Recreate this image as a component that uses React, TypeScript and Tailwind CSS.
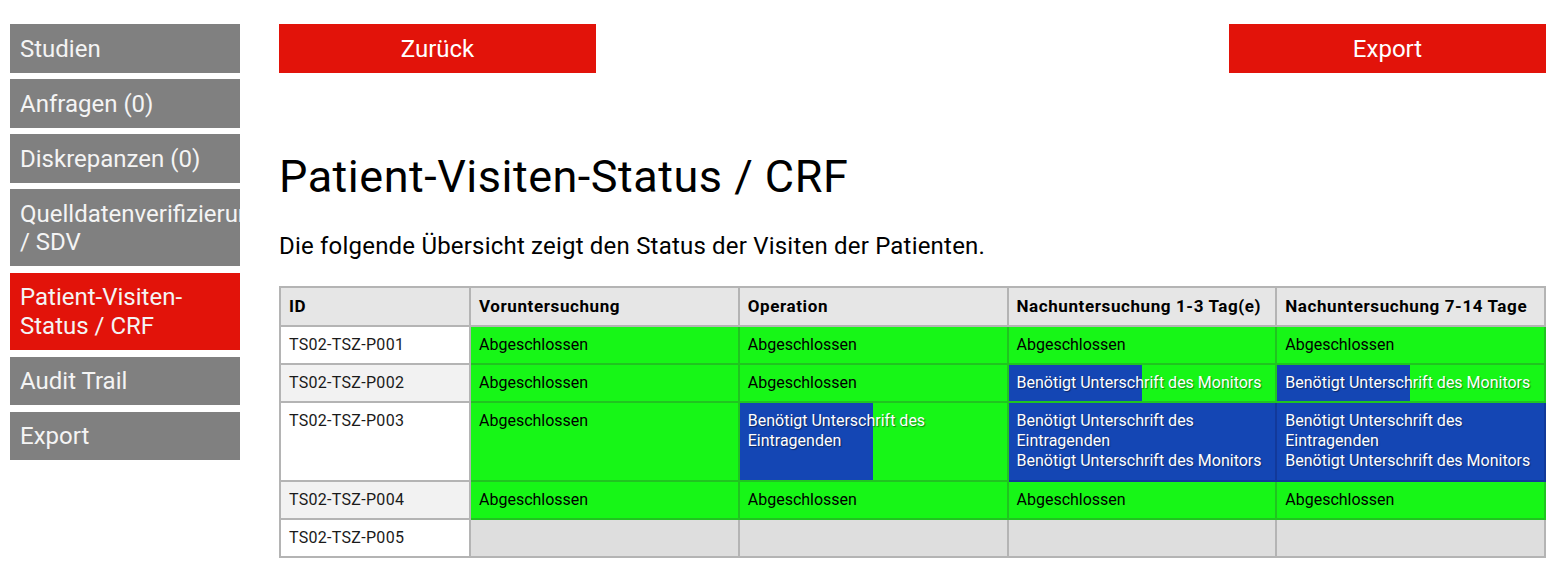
import React from "react";

type Status = "done" | "half" | "blue" | "empty";

interface Cell {
  status: Status;
  lines: string[];
}

interface Row {
  id: string;
  cells: Cell[];
}

const columns = [
  "Voruntersuchung",
  "Operation",
  "Nachuntersuchung 1-3 Tag(e)",
  "Nachuntersuchung 7-14 Tage",
];

const done: Cell = { status: "done", lines: ["Abgeschlossen"] };
const empty: Cell = { status: "empty", lines: [] };
const monitor: Cell = { status: "half", lines: ["Benötigt Unterschrift des Monitors"] };

const rows: Row[] = [
  { id: "TS02-TSZ-P001", cells: [done, done, done, done] },
  { id: "TS02-TSZ-P002", cells: [done, done, monitor, monitor] },
  {
    id: "TS02-TSZ-P003",
    cells: [
      done,
      { status: "half", lines: ["Benötigt Unterschrift des Eintragenden"] },
      {
        status: "blue",
        lines: ["Benötigt Unterschrift des Eintragenden", "Benötigt Unterschrift des Monitors"],
      },
      {
        status: "blue",
        lines: ["Benötigt Unterschrift des Eintragenden", "Benötigt Unterschrift des Monitors"],
      },
    ],
  },
  { id: "TS02-TSZ-P004", cells: [done, done, done, done] },
  { id: "TS02-TSZ-P005", cells: [empty, empty, empty, empty] },
];

const navItems = [
  { label: "Studien" },
  { label: "Anfragen (0)" },
  { label: "Diskrepanzen (0)" },
  { label: "Quelldatenverifizierung / SDV" },
  { label: "Patient-Visiten-Status / CRF", active: true },
  { label: "Audit Trail" },
  { label: "Export" },
];

const statusClass: Record<Status, string> = {
  done: "bg-[#17f617] border-[#20c420] text-black",
  half: "bg-[linear-gradient(to_right,#1446b4_50%,#17f617_50%)] border-[#20c420] text-white [text-shadow:1px_1px_1px_rgba(0,0,0,0.45)]",
  blue: "bg-[#1446b4] border-[#12399a] text-white [text-shadow:1px_1px_1px_rgba(0,0,0,0.35)]",
  empty: "bg-[#dedede] border-[#b4b4b4]",
};

export default function App(): React.JSX.Element {
  return (
    <div className="flex min-h-[573px] bg-white font-['Roboto','Liberation_Sans',sans-serif]">
      {/* Sidebar */}
      <nav className="ml-[10px] mt-[24px] w-[230px] shrink-0">
        {navItems.map((item) => (
          <div
            key={item.label}
            className={`mb-[6.5px] overflow-hidden px-[10px] pb-[9.5px] pt-[10.5px] text-[24px] leading-[28.6px] text-[#f4f4f4] ${
              item.active ? "bg-[#e2130a]" : "bg-[#808080]"
            }`}
          >
            {item.label}
          </div>
        ))}
      </nav>

      {/* Main */}
      <main className="ml-[39px] mr-[16px] mt-[24px] flex-1">
        <div className="flex justify-between">
          <button className="h-[49px] w-[317px] bg-[#e2130a] text-[24px] text-white">Zurück</button>
          <button className="h-[49px] w-[317px] bg-[#e2130a] text-[24px] text-white">Export</button>
        </div>

        <h1 className="mt-[77.5px] text-[45px] leading-[52px] tracking-[0.5px] text-black">
          Patient-Visiten-Status / CRF
        </h1>
        <p className="mt-[28.5px] text-[24px] leading-[30px] tracking-[0.2px] text-black">
          Die folgende Übersicht zeigt den Status der Visiten der Patienten.
        </p>

        <table className="mt-[24.5px] w-full table-fixed border-collapse text-[16px] leading-[20px]">
          <colgroup>
            <col className="w-[190px]" />
            <col />
            <col />
            <col />
            <col />
          </colgroup>
          <thead>
            <tr className="bg-[#e6e6e6]">
              <th className="border-2 border-[#b4b4b4] px-[8px] py-[8.5px] text-left text-[17px] font-bold tracking-[0.6px]">
                ID
              </th>
              {columns.map((c) => (
                <th
                  key={c}
                  className="border-2 border-[#b4b4b4] px-[8px] py-[8.5px] text-left text-[17px] font-bold tracking-[0.6px]"
                >
                  {c}
                </th>
              ))}
            </tr>
          </thead>
          <tbody>
            {rows.map((row, i) => (
              <tr key={row.id}>
                <td
                  className={`border-2 border-[#b4b4b4] px-[8px] py-[8.2px] align-top tracking-[0.3px] text-[#1a1a1a] ${
                    i % 2 === 1 ? "bg-[#f2f2f2]" : "bg-white"
                  }`}
                >
                  {row.id}
                </td>
                {row.cells.map((cell, j) => (
                  <td
                    key={j}
                    className={`border-2 px-[8px] py-[8.2px] align-top ${statusClass[cell.status]}`}
                  >
                    {cell.lines.map((l) => (
                      <div key={l}>{l}</div>
                    ))}
                  </td>
                ))}
              </tr>
            ))}
          </tbody>
        </table>
      </main>
    </div>
  );
}
